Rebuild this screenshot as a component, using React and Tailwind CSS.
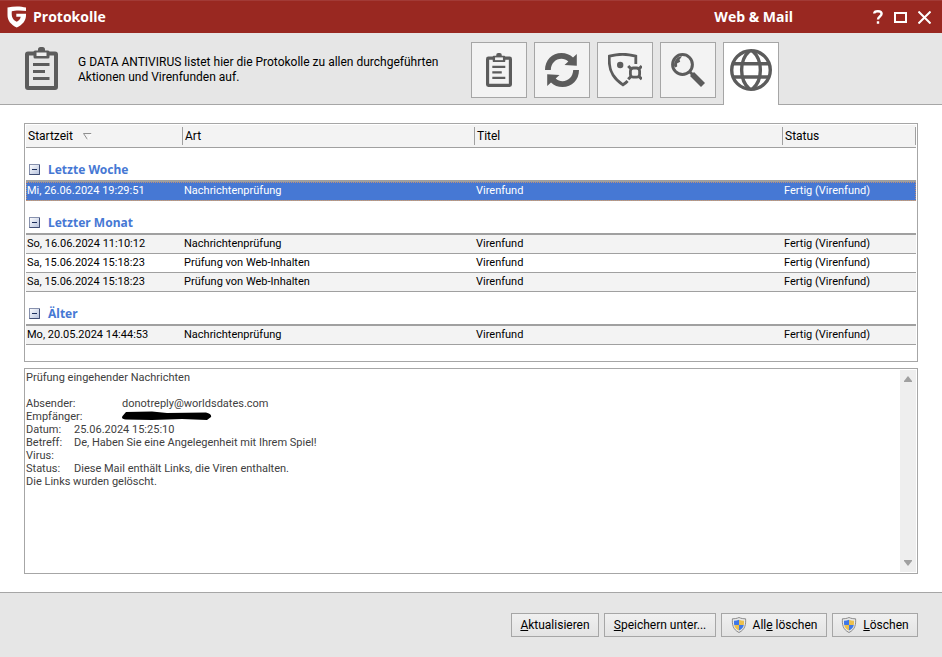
import React from 'react';
import { clsx } from 'clsx';

const GROUPS = [
    {
        label: 'Letzte Woche',
        rows: [
            { start: 'Mi, 26.06.2024 19:29:51', kind: 'Nachrichtenprüfung', title: 'Virenfund', status: 'Fertig (Virenfund)', selected: true },
        ],
    },
    {
        label: 'Letzter Monat',
        rows: [
            { start: 'So, 16.06.2024 11:10:12', kind: 'Nachrichtenprüfung', title: 'Virenfund', status: 'Fertig (Virenfund)' },
            { start: 'Sa, 15.06.2024 15:18:23', kind: 'Prüfung von Web-Inhalten', title: 'Virenfund', status: 'Fertig (Virenfund)' },
            { start: 'Sa, 15.06.2024 15:18:23', kind: 'Prüfung von Web-Inhalten', title: 'Virenfund', status: 'Fertig (Virenfund)' },
        ],
    },
    {
        label: 'Älter',
        rows: [
            { start: 'Mo, 20.05.2024 14:44:53', kind: 'Nachrichtenprüfung', title: 'Virenfund', status: 'Fertig (Virenfund)' },
        ],
    },
];

const Logo = () => (
    <svg width="20" height="22" viewBox="0 0 20 22" className="shrink-0">
        <path d="M.5 1.600C6.500 0 13.500 0 19 1.600V9c0 6-3.500 9.500-9.300 12.600C4 18.500.5 15 .5 9Z" fill="#fff" />
        <path d="M4.800 5.200C8 4.200 14 4.200 19.500 5V7.800H9.300v3h4.400c-.5 2.400-1.700 3.800-3.900 5C6 14 4.200 11 4.800 5.200Z" fill="#992821" />
    </svg>
);

const ClipboardIcon = ({ width, height }) => (
    <svg width={width} height={height} viewBox="0 0 33 43" className="shrink-0">
        <path d="M3 4.500h27a3 3 0 0 1 3 3V40a3 3 0 0 1-3 3H3a3 3 0 0 1-3-3V7.500a3 3 0 0 1 3-3ZM4 8.500V39h25V8.500Z" fill="#5c5c5c" fillRule="evenodd" />
        <path d="M13 3.500V2.500A2.500 2.500 0 0 1 15.500 0h2A2.500 2.500 0 0 1 20 2.500v1h3a1.500 1.500 0 0 1 1.500 1.500v5a1.500 1.500 0 0 1-1.500 1.500H10A1.500 1.500 0 0 1 8.500 10V5A1.500 1.500 0 0 1 10 3.500Z" fill="#5c5c5c" />
        <path d="M11.500 5.500h10v3.500h-10Z" fill="#f0f0f0" />
        <path d="M8 17.500h16.500M8 24.500h12M8 31.500h16.500" stroke="#5c5c5c" strokeWidth="3" />
    </svg>
);

const RefreshIcon = () => (
    <svg width="34" height="34" viewBox="0 0 34 34" fill="#5c5c5c">
        <path d="M0 17C0 7 7 0 16.500 0c4.500 0 8.500 1.600 11.500 4.600L31.800 1V12.800L19.500 12l3.800-3.600C21.300 6.600 19 5.800 16.500 5.800 10.500 5.800 6 10.500 5.800 17Z" />
        <path d="M34 17C34 27 27 34 17.500 34c-4.500 0-8.500-1.600-11.500-4.600L2.200 33V21.200L14.500 22l-3.800 3.600c2 1.800 4.300 2.600 6.800 2.600 6 0 10.500-4.700 10.700-11.200Z" />
    </svg>
);

const ShieldVirusIcon = () => (
    <svg width="34" height="34" viewBox="0 0 34 34" fill="none" stroke="#5c5c5c">
        <path d="M27.800 11V3.200C19.500.8 9.700.8 1.400 3.200c-.6 7.300.2 13.500 3.600 18.800 2.500 4 6 7.200 10 9.800 1.800-1.100 3.200-2.200 4.600-3.800" strokeWidth="2.800" />
        <circle cx="12.200" cy="12" r="3.200" fill="#5c5c5c" stroke="none" />
        <rect x="22.400" y="15" width="9.200" height="9.200" rx="3" strokeWidth="2.800" />
        <path d="M20.200 13l3.500 3.500M33.800 13l-3.500 3.500M20.200 26.200l3.500-3.500M33.800 26.200l-3.500-3.500" strokeWidth="3" />
    </svg>
);

const SearchIcon = () => (
    <svg width="34" height="34" viewBox="0 0 34 34" fill="none" stroke="#5c5c5c">
        <circle cx="11.500" cy="11.500" r="9.900" strokeWidth="3" />
        <path d="M3 12.500C3 7 6.500 3.500 11 3.200L8.500 6.800 9.200 8.800 6 10.500 6.200 13.500 4 14.500Z" fill="#5c5c5c" stroke="none" />
        <path d="M18 18l4 4" strokeWidth="3" />
        <path d="M21 21l11 11" strokeWidth="5.600" />
    </svg>
);

const GlobeIcon = () => (
    <svg width="42" height="42" viewBox="0 0 42 42" fill="none" stroke="#5c5c5c" strokeWidth="3.400">
        <circle cx="21" cy="21" r="19.300" />
        <path d="M3 14.800h36M3 28h36" />
        <path d="M19.500 2C9 11 9 31 19.500 40M22.500 2C33 11 33 31 22.500 40" />
    </svg>
);

const UacShield = () => (
    <svg width="16" height="16" viewBox="0 0 16 16" className="shrink-0">
        <path d="M8 .5C10 1.500 12.500 1.800 14.600 1.800c.3 5.500-.3 10.700-6.600 13.700C1.700 12.500 1.100 7.300 1.400 1.800 3.500 1.800 6 1.500 8 .5Z" fill="#e9e9e9" stroke="#8a8a8a" />
        <path d="M8 2.800V8H3.200C3 6.700 2.900 5.200 3 3.800 4.800 3.800 6.500 3.500 8 2.800ZM8 8h4.800c-.5 2.400-2 4.200-4.800 5.600Z" fill="#3f78e8" />
        <path d="M8 2.800V8h4.800c.2-1.300.3-2.800.2-4.200C11.200 3.800 9.500 3.500 8 2.800ZM8 8H3.200c.5 2.400 2 4.200 4.800 5.600Z" fill="#ecc04c" />
    </svg>
);

const CollapseIcon = () => (
    <svg width="11" height="12" viewBox="0 0 11 12">
        <defs>
            <linearGradient id="collapse" x1="0" y1="0" x2="1" y2="1">
                <stop offset="0" stopColor="#ffffff" />
                <stop offset="1" stopColor="#b4c0dc" />
            </linearGradient>
        </defs>
        <rect x="0.500" y="0.500" width="10" height="10" fill="url(#collapse)" stroke="#8791ad" />
        <path d="M0.500 10.500h10V1" fill="none" stroke="#3f4d74" />
        <path d="M3 5.500h5" stroke="#1c2e5c" />
    </svg>
);

const TABS = [
    { label: 'Alle Protokolle', icon: <ClipboardIcon width={26} height={34} /> },
    { label: 'Updates', icon: <RefreshIcon /> },
    { label: 'Virenschutz', icon: <ShieldVirusIcon /> },
    { label: 'Virenprüfung', icon: <SearchIcon /> },
    { label: 'Web & Mail', icon: <GlobeIcon />, active: true },
];

const HeadCell = ({ className, children }) => (
    <th className={clsx('h-[23px] border-b border-[#a0a0a0] bg-[#f3f3f3] p-0 text-left font-normal', className)}>
        <div className="flex h-[18px] items-center border-r border-[#a0a0a0] pl-0.5">{children}</div>
    </th>
);

const LogRow = ({ row, shaded }) => (
    <tr
        className={clsx(
            row.selected && 'bg-[#4678d4] text-white outline-1 -outline-offset-1 outline-dotted outline-[#c09078]',
            shaded && !row.selected && 'bg-[#f3f3f3]'
        )}
    >
        {[row.start, row.kind, row.title, row.status].map((value, i) => (
            <td key={i} className="h-[19px] truncate border-b border-[#a0a0a0] p-0 pl-px leading-[18px]">{value}</td>
        ))}
    </tr>
);

const LogTable = () => (
    <table className="w-full table-fixed border-separate border-spacing-0">
        <thead className="text-[12px]">
            <tr>
                <HeadCell className="w-[157px]">
                    Startzeit
                    <svg width="9" height="7" viewBox="0 0 9 7" className="ml-2.5" fill="none">
                        <path d="M8.500.5h-8L4.500 6.500" stroke="#8f8f8f" />
                        <path d="M8.500.5L4.500 6.500" stroke="#fff" />
                    </svg>
                </HeadCell>
                <HeadCell className="w-[292px]">Art</HeadCell>
                <HeadCell className="w-[308px]">Titel</HeadCell>
                <HeadCell>Status</HeadCell>
            </tr>
        </thead>
        {GROUPS.map((group) => (
            <tbody key={group.label}>
                <tr>
                    <th colSpan={4} className="h-[34px] border-b-2 border-[#a0a0a0] p-0 pb-0.5 pl-[3px] text-left align-bottom">
                        <button className="flex items-center gap-2 font-['Noto_Sans',sans-serif] text-[12px] leading-4 font-bold text-[#4678d4]">
                            <CollapseIcon />
                            {group.label}
                        </button>
                    </th>
                </tr>
                {group.rows.map((row, i) => (
                    <LogRow key={i} row={row} shaded={i % 2 === 0} />
                ))}
            </tbody>
        ))}
    </table>
);

const Details = () => (
    <div className="flex-1 pt-px leading-[13px] text-[#404040]">
        <p>Prüfung eingehender Nachrichten</p>
        <dl className="mt-[13px] grid grid-cols-[96px_1fr]">
            <dt>Absender:</dt>
            <dd>donotreply@worldsdates.com</dd>
            <dt>Empfänger:</dt>
            <dd>
                <svg width="90" height="10" viewBox="0 0 90 10" className="mt-px">
                    <path d="M4 1L30 .5 45 2 84 1.500Q90 3 89 6L85 9 60 8 30 9 4 8.500Q-2 8 1 4.500Z" fill="#000" />
                </svg>
            </dd>
        </dl>
        <dl className="grid grid-cols-[48px_1fr]">
            <dt>Datum:</dt>
            <dd>25.06.2024 15:25:10</dd>
            <dt>Betreff:</dt>
            <dd>De, Haben Sie eine Angelegenheit mit Ihrem Spiel!</dd>
            <dt>Virus:</dt>
            <dd />
            <dt>Status:</dt>
            <dd>Diese Mail enthält Links, die Viren enthalten.</dd>
        </dl>
        <p>Die Links wurden gelöscht.</p>
    </div>
);

const FooterButton = ({ className, children }) => (
    <button
        className={clsx(
            'flex h-6 items-center justify-center border border-[#a6a6a6] bg-linear-to-b from-[#f0f0f0] to-[#e3e3e3] whitespace-nowrap',
            className
        )}
    >
        {children}
    </button>
);

const App = () => (
    <div className="flex min-h-screen flex-col bg-white font-[Roboto,sans-serif] text-[12px] text-black">
        <header className="flex h-[33px] items-center border-t border-[#a23a36] bg-[#992821] pr-[11px] pl-[7px] font-['Open_Sans','Noto_Sans',sans-serif] text-white">
            <Logo />
            <h1 className="ml-1.5 text-[14px] leading-4 font-bold">Protokolle</h1>
            <span className="mr-20 ml-auto text-[14px] leading-4 font-bold">Web &amp; Mail</span>
            <div className="flex items-center gap-[11px]">
                <button aria-label="Hilfe">
                    <svg width="10" height="14" viewBox="0 0 10 14" fill="none" stroke="#fff" strokeWidth="2.400">
                        <path d="M1.200 3.500C1.400.4 8.600.4 8.600 3.800 8.600 6.500 5 6.500 5 9.500M5 11.300v2.500" />
                    </svg>
                </button>
                <button aria-label="Maximieren">
                    <svg width="13" height="11" viewBox="0 0 13 11" fill="none" stroke="#fff" strokeWidth="2">
                        <path d="M1 1h11v9H1Z" />
                    </svg>
                </button>
                <button aria-label="Schließen">
                    <svg width="13" height="13" viewBox="0 0 13 13" stroke="#fff" strokeWidth="2">
                        <path d="M.5.5l12 12M12.500.5l-12 12" />
                    </svg>
                </button>
            </div>
        </header>

        <div className="flex h-[72px] border-b border-[#a6a6a6] bg-[#e6e6e6]">
            <div className="flex w-1/2 items-center gap-5 pl-[25px]">
                <ClipboardIcon width={33} height={43} />
                <p className="pt-0.5 leading-[15px]">
                    G DATA ANTIVIRUS listet hier die Protokolle zu allen durchgeführten
                    <br />
                    Aktionen und Virenfunden auf.
                </p>
            </div>
            <nav className="flex gap-[7px] pt-[9px]">
                {TABS.map((tab) => (
                    <button
                        key={tab.label}
                        aria-label={tab.label}
                        className={clsx(
                            'flex w-14 justify-center border border-[#a6a6a6]',
                            tab.active ? '-mb-px h-[63px] border-b-0 bg-white pt-1.5' : 'h-14 items-center bg-[#f3f3f3]'
                        )}
                    >
                        {tab.icon}
                    </button>
                ))}
            </nav>
        </div>

        <main className="flex flex-1 flex-col gap-1.5 px-6 pt-[18px] pb-[18px] text-[11px]">
            <div className="border border-[#a6a6a6] px-px pt-px pb-4">
                <LogTable />
            </div>
            <div className="flex flex-1 border border-[#a6a6a6] p-px">
                <Details />
                <div className="flex w-4 flex-col items-center justify-between bg-[#eeeeee] py-1.5">
                    <svg width="8" height="6" viewBox="0 0 8 6"><path d="M0 6V5L4 0l4 5v1Z" fill="#a0a0a0" /></svg>
                    <svg width="8" height="6" viewBox="0 0 8 6"><path d="M0 0v1l4 5 4-5V0Z" fill="#a0a0a0" /></svg>
                </div>
            </div>
        </main>

        <footer className="flex justify-end gap-[5px] border-t border-[#a6a6a6] bg-[#e6e6e6] px-6 pt-5 pb-5">
            <FooterButton className="w-[88px]">
                <span><u>A</u>ktualisieren</span>
            </FooterButton>
            <FooterButton className="w-28">
                <span><u>S</u>peichern unter...</span>
            </FooterButton>
            <FooterButton className="w-[106px] gap-1.5">
                <UacShield />
                <span>All<u>e</u> löschen</span>
            </FooterButton>
            <FooterButton className="w-[86px] gap-1.5">
                <UacShield />
                <span><u>L</u>öschen</span>
            </FooterButton>
        </footer>
    </div>
);

export default App;
